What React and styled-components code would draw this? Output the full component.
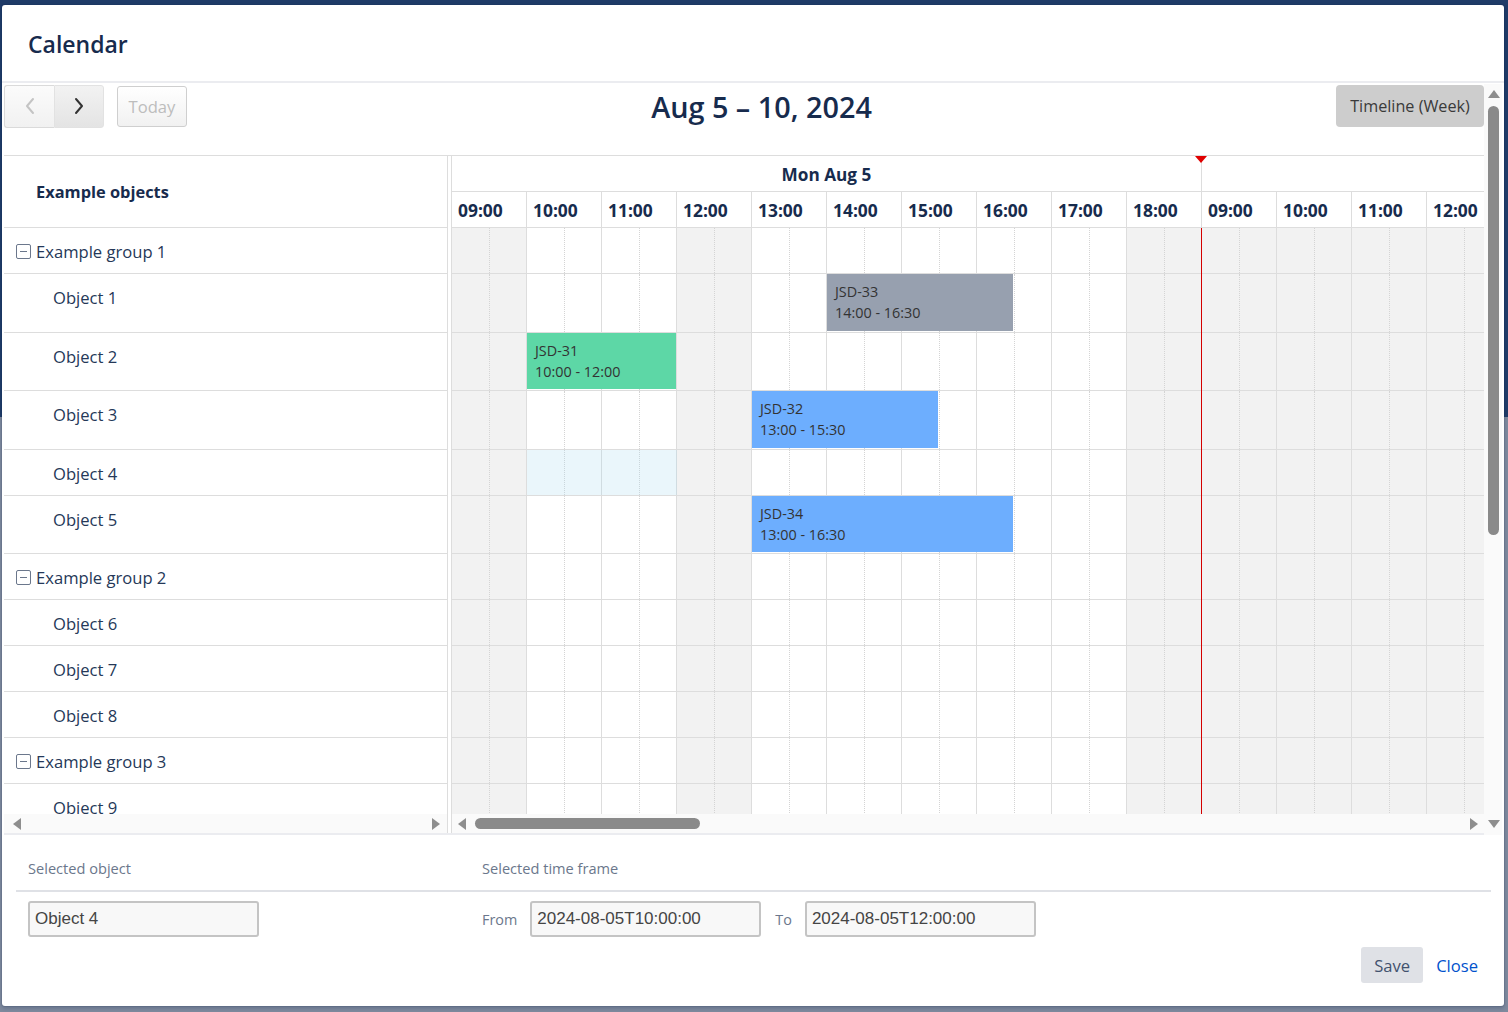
import React from 'react';
import styled, { createGlobalStyle } from 'styled-components';

const GlobalStyle = createGlobalStyle`
  html, body { margin: 0; padding: 0; }
  body {
    background: linear-gradient(to bottom, #1f3b68 0, #1f3b68 417px, #7f8a9e 417px);
    min-height: 1012px;
    overflow: hidden;
    font-family: "Open Sans", "Noto Sans", sans-serif;
  }
  * { box-sizing: border-box; }
`;

const HOUR_W = 75;
const HOURS = ['09:00','10:00','11:00','12:00','13:00','14:00','15:00','16:00','17:00','18:00','09:00','10:00','11:00','12:00'];
const OFF = [true,false,false,true,false,false,false,false,false,true,true,true,true,true];

const ROWS = [
  { group: true, label: 'Example group 1', h: 46 },
  { label: 'Object 1', h: 59, events: [{ id: 'JSD-33', s: 14, e: 16.5, color: '#97a0af', time: '14:00 - 16:30' }] },
  { label: 'Object 2', h: 58, events: [{ id: 'JSD-31', s: 10, e: 12, color: '#5dd7a6', time: '10:00 - 12:00' }] },
  { label: 'Object 3', h: 59, events: [{ id: 'JSD-32', s: 13, e: 15.5, color: '#6daefe', time: '13:00 - 15:30' }] },
  { label: 'Object 4', h: 46, selection: { s: 10, e: 12 } },
  { label: 'Object 5', h: 58, events: [{ id: 'JSD-34', s: 13, e: 16.5, color: '#6daefe', time: '13:00 - 16:30' }] },
  { group: true, label: 'Example group 2', h: 46 },
  { label: 'Object 6', h: 46 },
  { label: 'Object 7', h: 46 },
  { label: 'Object 8', h: 46 },
  { group: true, label: 'Example group 3', h: 46 },
  { label: 'Object 9', h: 46 },
];

const Page = styled.div`
  width: 1508px;
  height: 1012px;
  padding: 5px 4px 6px 2px;
`;

const Modal = styled.div`
  width: 1502px;
  height: 1001px;
  background: #fff;
  border-radius: 3px;
  display: flex;
  flex-direction: column;
  overflow: hidden;
  box-shadow: 0 0 0 1px rgba(9, 30, 66, 0.08), 0 2px 4px rgba(9, 30, 66, 0.25);
`;

const Header = styled.header`
  height: 78px;
  flex: none;
  display: flex;
  align-items: center;
  padding: 2px 0 0 26px;
  border-bottom: 2px solid #ebecf0;
`;

const Title = styled.h1`
  margin: 0;
  font-size: 23px;
  font-weight: 600;
  color: #172b4d;
`;

const Body = styled.div`
  height: 752px;
  flex: none;
  display: flex;
  padding: 1px 2px 0 2px;
`;

const Content = styled.div`
  width: 1480px;
  display: flex;
  flex-direction: column;
`;

const Toolbar = styled.div`
  height: 44px;
  display: flex;
  align-items: center;
  justify-content: space-between;
`;

const ToolChunk = styled.div`
  display: flex;
  align-items: center;
  height: 100%;
`;

const NavButton = styled.button`
  width: 50px;
  height: 43px;
  margin: 0;
  padding: 0;
  display: flex;
  align-items: center;
  justify-content: center;
  border: 1px solid ${p => (p.$disabled ? '#dadada' : '#e2e2e2')};
  border-right: ${p => (p.$disabled ? 'none' : '1px solid #e2e2e2')};
  border-radius: ${p => (p.$first ? '3px 0 0 3px' : '0 3px 3px 0')};
  background: ${p => (p.$disabled ? 'linear-gradient(#fbfbfb, #f1f1f1)' : 'linear-gradient(#f2f2f2, #e4e4e4)')};
  color: ${p => (p.$disabled ? '#c4c4c4' : '#333')};
`;

const TodayButton = styled.button`
  margin-left: 13px;
  width: 70px;
  height: 41px;
  border: 1px solid #cfcfcf;
  border-radius: 3px;
  background: linear-gradient(#ffffff, #f1f1f1);
  color: #bdbdbd;
  font-family: inherit;
  font-size: 16.6px;
  padding: 0;
`;

const RangeTitle = styled.h2`
  margin: 0;
  font-size: 28.8px;
  font-weight: 600;
  color: #172b4d;
`;

const ViewButton = styled.button`
  width: 148px;
  height: 42px;
  border: none;
  border-radius: 4px;
  background: #cdcdcd;
  color: #3a3a3a;
  font-family: inherit;
  font-size: 16.2px;
  padding: 0;
`;

const Calendar = styled.div`
  margin-top: 27px;
  border-top: 1px solid #ddd;
  border-bottom: 2px solid #ebecf0;
  display: grid;
  grid-template-columns: 443px 5px minmax(0, 1fr);
  grid-template-rows: 72px 586px 19px;
`;

const LeftHeader = styled.div`
  display: flex;
  align-items: center;
  padding-left: 32px;
  border-bottom: 1px solid #ddd;
  font-weight: 700;
  font-size: 16.4px;
  color: #172b4d;
`;

const Divider = styled.div`
  grid-column: 2;
  grid-row: 1 / 4;
  border-left: 1px solid #ddd;
  border-right: 1px solid #ddd;
  background: #fff;
`;

const LeftBody = styled.div`
  overflow: hidden;
`;

const ResourceRow = styled.div`
  height: ${p => p.$h}px;
  border-bottom: 1px solid #ddd;
  display: flex;
  align-items: flex-start;
  padding: 12px 0 0 ${p => (p.$group ? 12 : 49)}px;
  font-size: 16.6px;
  line-height: 24px;
  color: #253858;
`;

const CollapseBox = styled.span`
  width: 15px;
  height: 15px;
  margin: 4px 5px 0 0;
  border: 1.3px solid #6b778c;
  border-radius: 2px;
  display: flex;
  align-items: center;
  justify-content: center;
  &::after {
    content: '';
    width: 7px;
    height: 1.3px;
    background: #6b778c;
  }
`;

const RightHeader = styled.div`
  overflow: hidden;
  position: relative;
`;

const DayRow = styled.div`
  height: 36px;
  display: flex;
  border-bottom: 1px solid #ddd;
`;

const DayCell = styled.div`
  flex: none;
  width: ${p => p.$span * HOUR_W}px;
  border-right: 1px solid #ddd;
  display: flex;
  align-items: center;
  justify-content: center;
  padding-top: 2px;
  font-weight: 700;
  font-size: 17.2px;
  color: #172b4d;
`;

const NowArrow = styled.span`
  position: absolute;
  left: 743px;
  top: 0;
  width: 0;
  height: 0;
  border-left: 6px solid transparent;
  border-right: 6px solid transparent;
  border-top: 7px solid #e00000;
`;

const HourRow = styled.div`
  height: 36px;
  display: flex;
  border-bottom: 1px solid #ddd;
`;

const HourLabel = styled.div`
  flex: none;
  width: ${HOUR_W}px;
  border-right: 1px solid #ddd;
  padding: 1px 0 0 6px;
  display: flex;
  align-items: center;
  font-weight: 700;
  font-size: 17.4px;
  color: #172b4d;
`;

const RightBody = styled.div`
  overflow: hidden;
  position: relative;
`;

const TimeRow = styled.div`
  height: ${p => p.$h}px;
  border-bottom: 1px solid #ddd;
  display: flex;
  position: relative;
`;

const HourCell = styled.div`
  flex: none;
  width: ${HOUR_W}px;
  height: 100%;
  border-right: 1px solid #ddd;
  background: ${p => (p.$off ? '#f2f2f2' : '#fff')};
  position: relative;
  &::after {
    content: '';
    position: absolute;
    left: 37px;
    top: 0;
    bottom: 0;
    border-left: 1px dotted #d4d4d4;
  }
`;

const Selection = styled.div`
  position: absolute;
  top: 0;
  bottom: 0;
  background: rgba(170, 220, 240, 0.25);
`;

const EventBox = styled.div`
  position: absolute;
  top: 0;
  bottom: 1px;
  padding: 7px 8px 0;
  font-size: 14.4px;
  line-height: 21px;
  color: #333;
  background: ${p => p.$color};
  white-space: nowrap;
  overflow: hidden;
`;

const NowLine = styled.div`
  position: absolute;
  left: 749px;
  top: 0;
  bottom: 0;
  width: 1px;
  background: #d40000;
`;

const ScrollRow = styled.div`
  background: #fafafa;
  display: flex;
  align-items: center;
  padding: 0 ${p => p.$pr || 0}px 0 ${p => p.$pl || 0}px;
`;

const Arrow = styled.span`
  flex: none;
  width: 0;
  height: 0;
  ${p =>
    p.$dir === 'left'
      ? 'border-top: 6px solid transparent; border-bottom: 6px solid transparent; border-right: 8px solid #8e8e8e;'
      : p.$dir === 'right'
      ? 'border-top: 6px solid transparent; border-bottom: 6px solid transparent; border-left: 8px solid #8e8e8e;'
      : p.$dir === 'up'
      ? 'border-left: 6px solid transparent; border-right: 6px solid transparent; border-bottom: 8px solid #8e8e8e;'
      : 'border-left: 6px solid transparent; border-right: 6px solid transparent; border-top: 8px solid #8e8e8e;'}
`;

const Spacer = styled.div`
  flex: 1;
`;

const HThumb = styled.div`
  width: 225px;
  height: 11px;
  margin-left: 9px;
  border-radius: 6px;
  background: #8a8a8a;
`;

const VScroll = styled.div`
  width: 18px;
  background: #fafafa;
  display: flex;
  flex-direction: column;
  align-items: center;
  padding: 6px 0 7px 1px;
`;

const VThumb = styled.div`
  width: 11px;
  height: 429px;
  margin-top: 8px;
  border-radius: 6px;
  background: #8a8a8a;
`;

const Footer = styled.footer`
  flex: 1;
  padding: 0 13px 0 14px;
  display: flex;
  flex-direction: column;
`;

const FormGrid = styled.div`
  display: grid;
  grid-template-columns: 454px 1fr;
`;

const FieldHead = styled.div`
  padding: 23px 12px 12px;
  border-bottom: 2px solid #dfe1e6;
  font-size: 14.6px;
  line-height: 20px;
  font-weight: 500;
  color: #6b778c;
`;

const FieldBody = styled.div`
  padding: 9px 12px 0;
  display: flex;
  align-items: center;
`;

const InlineLabel = styled.span`
  font-size: 14.4px;
  font-weight: 500;
  color: #6b778c;
  margin: ${p => p.$m || '0 13px 0 0'};
`;

const TextInput = styled.input`
  width: 231px;
  height: 36px;
  border: 2px solid #c4c4c4;
  border-radius: 3px;
  background: #f8f8f8;
  padding: 0 5px;
  font-family: "Liberation Sans", Arial, sans-serif;
  font-size: 17px;
  color: #454545;
  outline: none;
`;

const Actions = styled.div`
  display: flex;
  justify-content: flex-end;
  align-items: center;
  gap: 13px;
  margin-top: 10px;
  padding-right: 13px;
`;

const SaveButton = styled.button`
  height: 36px;
  padding: 0 13px;
  border: none;
  border-radius: 3px;
  background: #dfe1e6;
  color: #42526e;
  font-family: inherit;
  font-size: 16.6px;
`;

const CloseLink = styled.a`
  font-size: 16.6px;
  color: #0052cc;
  text-decoration: none;
`;

const Chevron = ({ dir }) => (
  <svg width="12" height="18" viewBox="0 0 12 18" fill="none">
    <polyline
      points={dir === 'left' ? '9,2 3,9 9,16' : '3,2 9,9 3,16'}
      stroke="currentColor"
      strokeWidth="2"
      strokeLinecap="round"
      strokeLinejoin="round"
    />
  </svg>
);

export default function App() {
  return (
    <>
      <GlobalStyle />
      <Page>
        <Modal>
          <Header>
            <Title>Calendar</Title>
          </Header>
          <Body>
            <Content>
              <Toolbar>
                <ToolChunk>
                  <NavButton $first $disabled>
                    <Chevron dir="left" />
                  </NavButton>
                  <NavButton>
                    <Chevron dir="right" />
                  </NavButton>
                  <TodayButton>Today</TodayButton>
                </ToolChunk>
                <RangeTitle>Aug 5 – 10, 2024</RangeTitle>
                <ToolChunk>
                  <ViewButton>Timeline (Week)</ViewButton>
                </ToolChunk>
              </Toolbar>

              <Calendar>
                <LeftHeader>Example objects</LeftHeader>
                <Divider />
                <RightHeader>
                  <DayRow>
                    <DayCell $span={10}>Mon Aug 5</DayCell>
                    <DayCell $span={4} />
                  </DayRow>
                  <HourRow>
                    {HOURS.map((h, i) => (
                      <HourLabel key={i}>{h}</HourLabel>
                    ))}
                  </HourRow>
                  <NowArrow />
                </RightHeader>

                <LeftBody>
                  {ROWS.map((r, i) => (
                    <ResourceRow key={i} $h={r.h} $group={r.group}>
                      {r.group && <CollapseBox />}
                      {r.label}
                    </ResourceRow>
                  ))}
                </LeftBody>
                <RightBody>
                  {ROWS.map((r, i) => (
                    <TimeRow key={i} $h={r.h}>
                      {HOURS.map((_, j) => (
                        <HourCell key={j} $off={OFF[j]} />
                      ))}
                      {r.selection && (
                        <Selection
                          style={{
                            left: (r.selection.s - 9) * HOUR_W,
                            width: (r.selection.e - r.selection.s) * HOUR_W,
                          }}
                        />
                      )}
                      {(r.events || []).map(ev => (
                        <EventBox
                          key={ev.id}
                          $color={ev.color}
                          style={{
                            left: (ev.s - 9) * HOUR_W,
                            width: Math.floor((ev.e - ev.s) * HOUR_W - 1),
                          }}
                        >
                          <div>{ev.id}</div>
                          <div>{ev.time}</div>
                        </EventBox>
                      ))}
                    </TimeRow>
                  ))}
                  <NowLine />
                </RightBody>

                <ScrollRow $pl={9} $pr={7}>
                  <Arrow $dir="left" />
                  <Spacer />
                  <Arrow $dir="right" />
                </ScrollRow>
                <ScrollRow $pl={6} $pr={6}>
                  <Arrow $dir="left" />
                  <HThumb />
                  <Spacer />
                  <Arrow $dir="right" />
                </ScrollRow>
              </Calendar>
            </Content>
            <VScroll>
              <Arrow $dir="up" />
              <VThumb />
              <Spacer />
              <Arrow $dir="down" />
            </VScroll>
          </Body>

          <Footer>
            <FormGrid>
              <FieldHead>Selected object</FieldHead>
              <FieldHead>Selected time frame</FieldHead>
              <FieldBody>
                <TextInput readOnly value="Object 4" />
              </FieldBody>
              <FieldBody>
                <InlineLabel>From</InlineLabel>
                <TextInput readOnly value="2024-08-05T10:00:00" />
                <InlineLabel $m="0 13px 0 14px">To</InlineLabel>
                <TextInput readOnly value="2024-08-05T12:00:00" />
              </FieldBody>
            </FormGrid>
            <Actions>
              <SaveButton>Save</SaveButton>
              <CloseLink href="#">Close</CloseLink>
            </Actions>
          </Footer>
        </Modal>
      </Page>
    </>
  );
}
